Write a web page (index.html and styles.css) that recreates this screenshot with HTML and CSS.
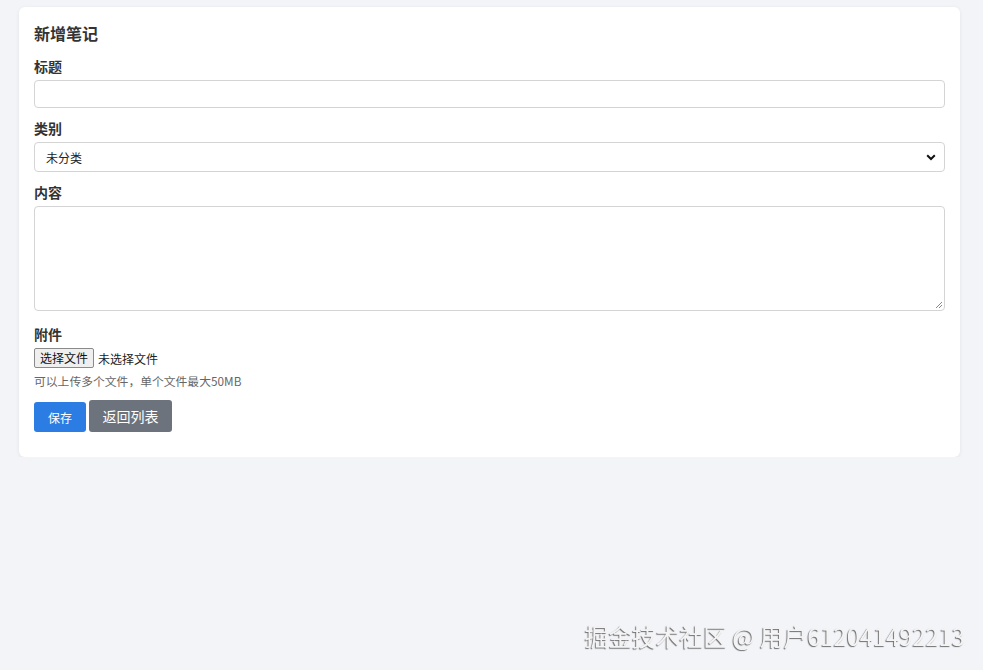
FILE: index.html
```html
<!DOCTYPE html>
<html lang="zh">
<head>
<meta charset="utf-8">
<title>新增笔记</title>
<link rel="stylesheet" href="styles.css">
</head>
<body>
<div class="page">
  <div class="card">
    <h3 class="card-title">新增笔记</h3>
    <form class="form">
      <div class="group">
        <label class="label">标题</label>
        <input class="control input" type="text">
      </div>
      <div class="group">
        <label class="label">类别</label>
        <div class="select">
          <span class="select-text">未分类</span>
          <svg class="chev" width="10" height="7" viewBox="0 0 10 7"><path d="M1.2 1.3 L5 5 L8.8 1.3" fill="none" stroke="#111" stroke-width="2"/></svg>
        </div>
      </div>
      <div class="group">
        <label class="label">内容</label>
        <div class="textarea">
          <svg class="grip" width="8" height="8" viewBox="0 0 8 8"><path d="M7 1 L1 7 M7 4 L4 7" stroke="#888" stroke-width="1"/></svg>
        </div>
      </div>
      <div class="group">
        <label class="label">附件</label>
        <div class="file-row">
          <span class="file-btn">选择文件</span>
          <span class="file-name">未选择文件</span>
        </div>
        <div class="help">可以上传多个文件，单个文件最大50MB</div>
      </div>
      <div class="actions">
        <span class="btn btn-primary">保存</span>
        <span class="btn btn-secondary">返回列表</span>
      </div>
    </form>
  </div>
</div>
<div class="watermark">掘金技术社区 @ 用户612041492213</div>
</body>
</html>
```
FILE: styles.css
```css
html, body {
  margin: 0;
  padding: 0;
  background: #f3f4f8;
  font-family: "Noto Sans CJK SC", "Noto Sans", sans-serif;
  color: #222;
}
.page {
  padding: 7px 23px 0 19px;
}
.card {
  background: #fff;
  border-radius: 6px;
  box-shadow: 0 1px 4px rgba(0,0,0,0.07);
  padding: 15px 15px 25px 15px;
}
.card-title {
  margin: 0 0 12px 0;
  font-size: 16px;
  line-height: 22px;
  font-weight: 700;
  color: #333;
}
.group {
  margin-bottom: 10px;
}
.label {
  display: block;
  font-size: 14px;
  line-height: 20px;
  font-weight: 700;
  color: #333;
  margin-bottom: 4px;
}
.input {
  display: block;
  box-sizing: border-box;
  width: 100%;
  height: 28px;
  border: 1px solid #d4d4d4;
  border-radius: 4px;
  background: #fff;
  outline: none;
  margin: 0;
}
.select {
  box-sizing: border-box;
  height: 30px;
  border: 1px solid #d4d4d4;
  border-radius: 4px;
  display: flex;
  align-items: center;
  justify-content: space-between;
  padding: 0 8px 0 11px;
}
.select-text {
  font-size: 12px;
  color: #222;
}
.textarea {
  box-sizing: border-box;
  height: 105px;
  border: 1px solid #d4d4d4;
  border-radius: 4px;
  display: flex;
  align-items: flex-end;
  justify-content: flex-end;
  padding: 1px;
  margin-top: 1px;
  margin-bottom: 13px;
}
.file-row {
  display: flex;
  align-items: center;
  gap: 4px;
  height: 20px;
}
.file-btn {
  box-sizing: border-box;
  height: 20px;
  padding: 0 5px;
  border: 1px solid #8a8a8a;
  border-radius: 2px;
  background: #efefef;
  font-size: 12px;
  line-height: 18px;
  color: #111;
}
.file-name {
  font-size: 12px;
  color: #222;
}
.help {
  margin-top: 4px;
  font-size: 11.8px;
  line-height: 18px;
  color: #666;
}
.actions {
  display: flex;
  align-items: flex-end;
  gap: 3px;
  margin-top: 0;
}
.btn {
  box-sizing: border-box;
  display: flex;
  align-items: center;
  justify-content: center;
  border-radius: 3px;
  color: #fff;
}
.btn-primary {
  width: 52px;
  height: 30px;
  background: #2b7de3;
  font-size: 12px;
}
.btn-secondary {
  width: 83px;
  height: 32px;
  background: #6c737c;
  font-size: 14px;
}
.watermark {
  position: fixed;
  right: 18px;
  top: 620px;
  font-size: 23.7px;
  line-height: 32px;
  color: #f4f4f4;
  text-shadow: -1px 1px 1px rgba(0,0,0,0.55);
  white-space: nowrap;
}
```
